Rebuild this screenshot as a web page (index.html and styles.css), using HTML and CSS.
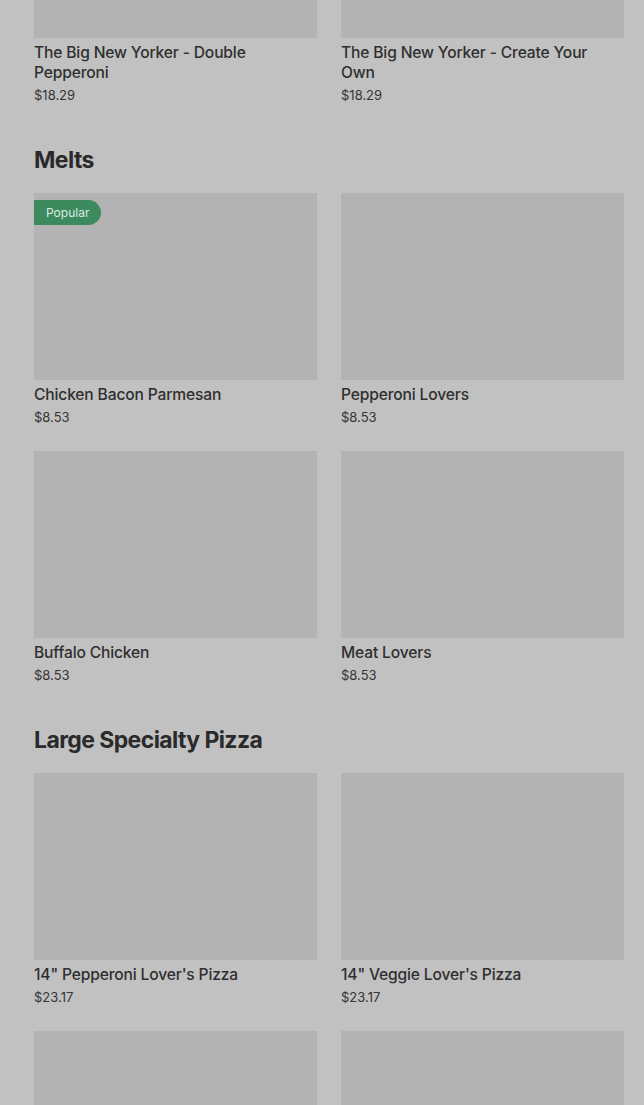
FILE: index.html
```html
<!DOCTYPE html>
<html lang="en">
<head>
    <meta charset="UTF-8">
    <meta name="viewport" content="width=device-width, initial-scale=1.0">
    <title>Menu</title>
    <link rel="stylesheet" href="styles.css">
</head>
<body>

    <div class="menu">
        <section class="section">
            <div class="grid">
                <div class="item">
                    <div class="photo"></div>
                    <div class="name">The Big New Yorker - Double Pepperoni</div>
                    <div class="price">$18.29</div>
                </div>
                <div class="item">
                    <div class="photo"></div>
                    <div class="name">The Big New Yorker - Create Your Own</div>
                    <div class="price">$18.29</div>
                </div>
            </div>
        </section>

        <section class="section">
            <h2>Melts</h2>
            <div class="grid">
                <div class="item">
                    <div class="photo">
                        <span class="badge">Popular</span>
                    </div>
                    <div class="name">Chicken Bacon Parmesan</div>
                    <div class="price">$8.53</div>
                </div>
                <div class="item">
                    <div class="photo"></div>
                    <div class="name">Pepperoni Lovers</div>
                    <div class="price">$8.53</div>
                </div>
                <div class="item">
                    <div class="photo"></div>
                    <div class="name">Buffalo Chicken</div>
                    <div class="price">$8.53</div>
                </div>
                <div class="item">
                    <div class="photo"></div>
                    <div class="name">Meat Lovers</div>
                    <div class="price">$8.53</div>
                </div>
            </div>
        </section>

        <section class="section">
            <h2>Large Specialty Pizza</h2>
            <div class="grid">
                <div class="item">
                    <div class="photo"></div>
                    <div class="name">14" Pepperoni Lover's Pizza</div>
                    <div class="price">$23.17</div>
                </div>
                <div class="item">
                    <div class="photo"></div>
                    <div class="name">14" Veggie Lover's Pizza</div>
                    <div class="price">$23.17</div>
                </div>
                <div class="item">
                    <div class="photo"></div>
                </div>
                <div class="item">
                    <div class="photo"></div>
                </div>
            </div>
        </section>
    </div>

</body>
</html>
```

FILE: styles.css
```css
body {
    margin: 0;
    font-family: Inter, "Liberation Sans", sans-serif;
    background-color: #c1c1c1;
    color: #2f2f2f;
    overflow: hidden;
}
.menu {
    margin-top: -149px;
    padding: 0 20px 0 34px;
}
.section + .section {
    margin-top: 41px;
}
h2 {
    margin: 0 0 19px;
    font-size: 23px;
    line-height: 28px;
    font-weight: 700;
    letter-spacing: -0.6px;
    color: #2a2a2a;
}
.grid {
    display: grid;
    grid-template-columns: 1fr 1fr;
    column-gap: 24px;
    row-gap: 24px;
}
.photo {
    position: relative;
    height: 187px;
    background-color: #b3b3b3;
}
.badge {
    position: absolute;
    top: 7px;
    left: 0;
    height: 25px;
    line-height: 25px;
    padding: 0 12px;
    font-size: 12px;
    color: #dcebe1;
    background-color: #3d8a5e;
    border-radius: 0 13px 13px 0;
}
.name {
    margin-top: 5px;
    font-size: 15.6px;
    line-height: 20px;
    font-weight: 500;
    letter-spacing: -0.15px;
}
.price {
    margin-top: 2px;
    font-size: 13px;
    line-height: 20px;
    color: #353535;
}
```
